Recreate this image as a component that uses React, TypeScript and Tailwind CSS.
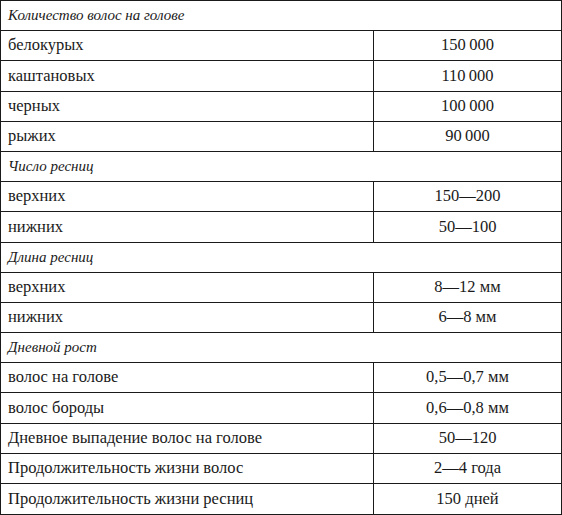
type Row =
  | { kind: 'head'; label: string }
  | { kind: 'data'; label: string; value: string }

const rows: Row[] = [
  { kind: 'head', label: 'Количество волос на голове' },
  { kind: 'data', label: 'белокурых', value: '150\u2009000' },
  { kind: 'data', label: 'каштановых', value: '110\u2009000' },
  { kind: 'data', label: 'черных', value: '100\u2009000' },
  { kind: 'data', label: 'рыжих', value: '90\u2009000' },
  { kind: 'head', label: 'Число ресниц' },
  { kind: 'data', label: 'верхних', value: '150—200' },
  { kind: 'data', label: 'нижних', value: '50—100' },
  { kind: 'head', label: 'Длина ресниц' },
  { kind: 'data', label: 'верхних', value: '8—12 мм' },
  { kind: 'data', label: 'нижних', value: '6—8 мм' },
  { kind: 'head', label: 'Дневной рост' },
  { kind: 'data', label: 'волос на голове', value: '0,5—0,7 мм' },
  { kind: 'data', label: 'волос бороды', value: '0,6—0,8 мм' },
  { kind: 'data', label: 'Дневное выпадение волос на голове', value: '50—120' },
  { kind: 'data', label: 'Продолжительность жизни волос', value: '2—4 года' },
  { kind: 'data', label: 'Продолжительность жизни ресниц', value: '150 дней' },
]

export default function App() {
  return (
    <div className="w-[562px] h-[515px] bg-white text-[#1a1a1a] text-[16.5px] font-['Liberation_Serif','DejaVu_Serif',serif]">
      <div className="flex flex-col border border-[#1a1a1a]">
        {rows.map((r, i) => (
          <div
            key={i}
            className={`flex h-[30.2px] ${i < rows.length - 1 ? 'border-b border-[#1a1a1a]' : ''}`}
          >
            {r.kind === 'head' ? (
              <div className="flex items-center pl-[7px] italic text-[15px]">{r.label}</div>
            ) : (
              <>
                <div className="w-[373px] flex items-center pl-[7px] border-r border-[#1a1a1a]">
                  {r.label}
                </div>
                <div className="flex-1 flex items-center justify-center">{r.value}</div>
              </>
            )}
          </div>
        ))}
      </div>
    </div>
  )
}
